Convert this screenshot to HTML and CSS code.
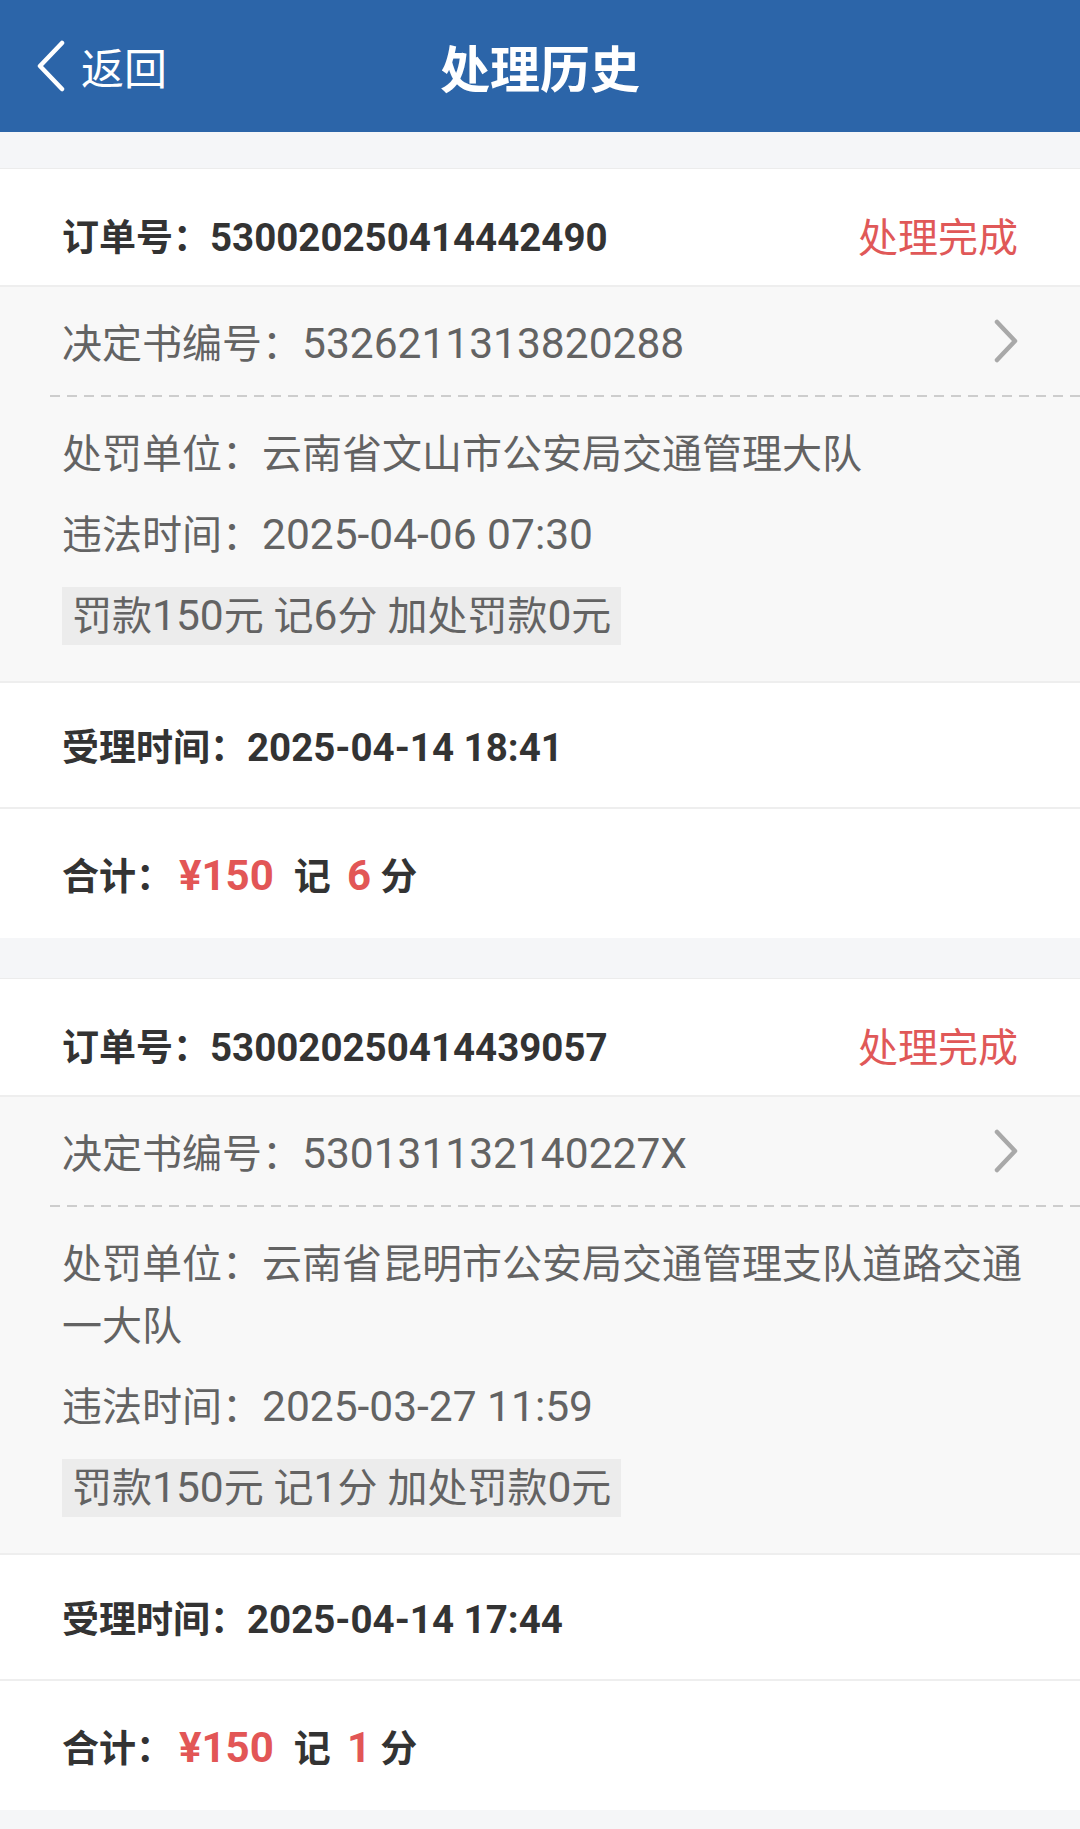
FILE: index.html
```html
<!DOCTYPE html>
<html lang="zh-CN">
<head>
    <meta charset="UTF-8">
    <meta name="viewport" content="width=device-width, initial-scale=1.0">
    <title>处理历史</title>
    <link rel="stylesheet" href="styles.css">
</head>
<body>
    <div class="header">
        <div class="back">
            <svg class="back-icon" width="30" height="52" viewBox="0 0 30 52">
                <polyline points="26,3 4,26 26,49" fill="none" stroke="#fff" stroke-width="4.5" stroke-linecap="round" stroke-linejoin="round"/>
            </svg>
            <span>返回</span>
        </div>
        <h1 class="title">处理历史</h1>
        <div></div>
    </div>

    <div class="list">
        <div class="card">
            <div class="order-row">
                <div class="order-no">订单号：<span class="num-b">530020250414442490</span></div>
                <div class="status">处理完成</div>
            </div>
            <div class="detail">
                <div class="decision">
                    <div>决定书编号：<span class="num">5326211313820288</span></div>
                    <svg class="arrow" width="24" height="44" viewBox="0 0 24 44">
                        <polyline points="3,3 21,22 3,41" fill="none" stroke="#a9a9a9" stroke-width="4.5" stroke-linecap="round" stroke-linejoin="round"/>
                    </svg>
                </div>
                <div class="dash"></div>
                <div class="info">
                    <div class="line">处罚单位：云南省文山市公安局交通管理大队</div>
                    <div class="line">违法时间：<span class="num">2025-04-06 07:30</span></div>
                    <div class="tag">罚款<span class="num">150</span>元 记<span class="num">6</span>分 加处罚款<span class="num">0</span>元</div>
                </div>
            </div>
            <div class="accept-row">
                <div>受理时间：<span class="num-b">2025-04-14 18:41</span></div>
            </div>
            <div class="total-row">
                <div>合计：<span class="red big money">¥150</span>记 <span class="red big points">6</span> 分</div>
            </div>
        </div>

        <div class="card">
            <div class="order-row">
                <div class="order-no">订单号：<span class="num-b">530020250414439057</span></div>
                <div class="status">处理完成</div>
            </div>
            <div class="detail">
                <div class="decision">
                    <div>决定书编号：<span class="num">530131132140227X</span></div>
                    <svg class="arrow" width="24" height="44" viewBox="0 0 24 44">
                        <polyline points="3,3 21,22 3,41" fill="none" stroke="#a9a9a9" stroke-width="4.5" stroke-linecap="round" stroke-linejoin="round"/>
                    </svg>
                </div>
                <div class="dash"></div>
                <div class="info">
                    <div class="line">处罚单位：云南省昆明市公安局交通管理支队道路交通一大队</div>
                    <div class="line">违法时间：<span class="num">2025-03-27 11:59</span></div>
                    <div class="tag">罚款<span class="num">150</span>元 记<span class="num">1</span>分 加处罚款<span class="num">0</span>元</div>
                </div>
            </div>
            <div class="accept-row">
                <div>受理时间：<span class="num-b">2025-04-14 17:44</span></div>
            </div>
            <div class="total-row">
                <div>合计：<span class="red big money">¥150</span>记 <span class="red big points">1</span> 分</div>
            </div>
        </div>
    </div>
</body>
</html>
```

FILE: styles.css
```css
body {
    margin: 0;
    font-family: "Roboto", "Noto Sans CJK SC", sans-serif;
    font-size: 40px;
    background-color: #f5f6f8;
    color: #333;
}
.header {
    height: 132px;
    background-color: #2c65a9;
    color: #fff;
    display: grid;
    grid-template-columns: 1fr auto 1fr;
    align-items: center;
}
.back {
    display: flex;
    align-items: center;
    padding-left: 36px;
    font-size: 43px;
}
.back-icon {
    margin-right: 15px;
}
.title {
    margin: 0;
    font-size: 50px;
    font-weight: bold;
}
.list {
    padding-top: 36px;
    padding-bottom: 20px;
}
.card {
    background-color: #fff;
    border-top: 1px solid #ececec;
    margin-bottom: 40px;
}
.card:last-child {
    margin-bottom: 0;
}
.order-row {
    box-sizing: border-box;
    height: 118px;
    padding: 16px 62px 0;
    display: flex;
    align-items: center;
    justify-content: space-between;
    border-bottom: 2px solid #eeeeee;
}
.order-no {
    font-weight: bold;
    font-size: 37px;
}
.status {
    color: #e05858;
}
.num {
    font-size: 42.5px;
}
.num-b {
    font-size: 38.5px;
}
.detail {
    background-color: #f8f8f8;
    padding-left: 50px;
    color: #636363;
    border-bottom: 2px solid #eeeeee;
}
.decision {
    height: 108px;
    padding: 0 62px 0 12px;
    display: flex;
    align-items: center;
    justify-content: space-between;
}
.dash {
    height: 2px;
    background: repeating-linear-gradient(to right, #cdcdcd 0 10px, transparent 10px 17px);
}
.info {
    padding: 27px 50px 36px 12px;
}
.line {
    line-height: 62px;
    margin-bottom: 18px;
}
.tag {
    display: inline-block;
    margin-top: 2px;
    padding: 0 10px;
    line-height: 57px;
    background-color: #ececec;
}
.accept-row {
    box-sizing: border-box;
    height: 126px;
    padding: 0 62px;
    display: flex;
    align-items: center;
    font-size: 37px;
    font-weight: bold;
    border-bottom: 2px solid #eeeeee;
}
.total-row {
    box-sizing: border-box;
    height: 129px;
    padding: 0 62px;
    display: flex;
    align-items: center;
    font-size: 37px;
    font-weight: bold;
}
.red {
    color: #e25656;
}
.big {
    font-size: 42px;
}
.money {
    margin: 0 20px 0 6px;
}
.points {
    margin-left: 7px;
}
```
